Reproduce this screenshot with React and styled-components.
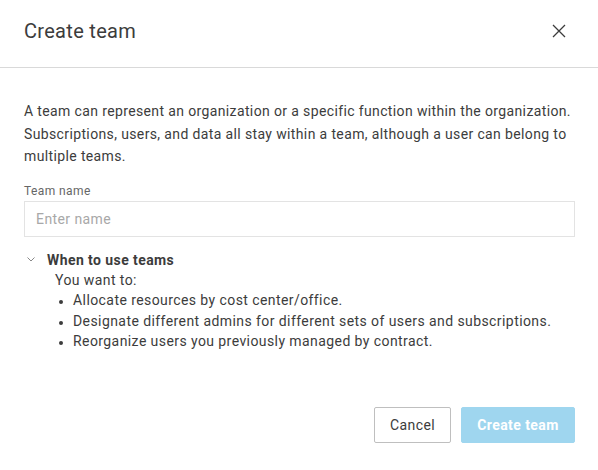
import React from "react";
import styled, { createGlobalStyle } from "styled-components";

const Global = createGlobalStyle`
  html, body { margin: 0; padding: 0; background: #fff; }
  body { font-family: Roboto, "Noto Sans", sans-serif; color: #3c3c3c; letter-spacing: 0.42px; }
  * { box-sizing: border-box; }
`;

const Dialog = styled.div`
  width: 598px;
  height: 470px;
  display: flex;
  flex-direction: column;
  background: #fff;
`;

const Header = styled.div`
  height: 68px;
  display: flex;
  align-items: center;
  justify-content: space-between;
  padding: 0 28px 6px 24px;
  border-bottom: 1px solid #d9d9d9;
`;

const Title = styled.h1`
  margin: 0;
  font-size: 20px;
  font-weight: 400;
  letter-spacing: 0.3px;
  color: #3c3c3c;
`;

const CloseButton = styled.button`
  border: 0;
  background: transparent;
  padding: 0;
  width: 22px;
  height: 22px;
  display: flex;
  align-items: center;
  justify-content: center;
  cursor: pointer;
`;

const Body = styled.div`
  padding: 32px 22px 0 24px;
  display: flex;
  flex-direction: column;
`;

const Intro = styled.p`
  margin: 0;
  font-size: 14px;
  line-height: 22.5px;
  letter-spacing: 0.37px;
  color: #3c3c3c;
`;

const Label = styled.label`
  margin-top: 15px;
  font-size: 12px;
  line-height: 16px;
  color: #666;
`;

const Input = styled.input`
  margin-top: 2px;
  margin-right: 1px;
  height: 36px;
  border: 1px solid #e3e3e3;
  padding: 0 11px;
  font-family: inherit;
  font-size: 14px;
  letter-spacing: 0.42px;
  color: #3c3c3c;
  outline: none;
  &::placeholder { color: #a8a8a8; }
`;

const Section = styled.div`
  margin-top: 13px;
  display: flex;
  flex-direction: column;
`;

const SectionHead = styled.div`
  display: flex;
  align-items: center;
  gap: 12px;
  padding-left: 3px;
  height: 20px;
  font-size: 14px;
  font-weight: 700;
  color: #3c3c3c;
`;

const SectionBody = styled.div`
  padding-left: 31px;
  font-size: 14px;
  line-height: 20.5px;
  color: #3c3c3c;
`;

const List = styled.ul`
  margin: 0;
  padding-left: 18px;
  li::marker { font-size: 12px; }
`;

const Footer = styled.div`
  margin-top: auto;
  display: flex;
  justify-content: flex-end;
  gap: 10px;
  padding: 0 23px 27px 24px;
`;

const Button = styled.button`
  height: 36px;
  padding: 0 14px;
  font-family: inherit;
  font-size: 14px;
  letter-spacing: 0.42px;
  font-weight: ${(p) => (p.$primary ? 700 : 400)};
  border-radius: 2px;
  border: 1px solid ${(p) => (p.$primary ? "#9fd6ef" : "#bfbfbf")};
  background: ${(p) => (p.$primary ? "#9fd6ef" : "#fff")};
  color: ${(p) => (p.$primary ? "#fff" : "#3c3c3c")};
  min-width: ${(p) => (p.$primary ? "114px" : "77px")};
`;

export default function App() {
  return (
    <>
      <Global />
      <Dialog>
        <Header>
          <Title>Create team</Title>
          <CloseButton aria-label="Close">
            <svg width="14" height="14" viewBox="0 0 14 14">
              <path d="M1 1 L13 13 M13 1 L1 13" stroke="#3c3c3c" strokeWidth="1.3" fill="none" />
            </svg>
          </CloseButton>
        </Header>
        <Body>
          <Intro>
            A team can represent an organization or a specific function within the organization.
            Subscriptions, users, and data all stay within a team, although a user can belong to
            multiple teams.
          </Intro>
          <Label>Team name</Label>
          <Input placeholder="Enter name" />
          <Section>
            <SectionHead>
              <svg width="8" height="5" viewBox="0 0 8 5">
                <path d="M0.5 0.5 L4 4 L7.5 0.5" stroke="#888" strokeWidth="1" fill="none" />
              </svg>
              When to use teams
            </SectionHead>
            <SectionBody>
              You want to:
              <List>
                <li>Allocate resources by cost center/office.</li>
                <li>Designate different admins for different sets of users and subscriptions.</li>
                <li>Reorganize users you previously managed by contract.</li>
              </List>
            </SectionBody>
          </Section>
        </Body>
        <Footer>
          <Button>Cancel</Button>
          <Button $primary>Create team</Button>
        </Footer>
      </Dialog>
    </>
  );
}
